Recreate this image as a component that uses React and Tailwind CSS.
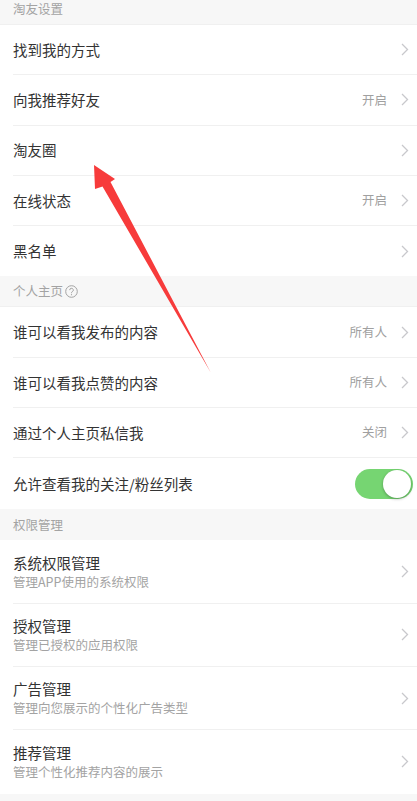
import { ChevronRight } from 'lucide-react'

const friendRows = [
  { title: '找到我的方式' },
  { title: '向我推荐好友', value: '开启' },
  { title: '淘友圈' },
  { title: '在线状态', value: '开启' },
  { title: '黑名单' },
]

const homeRows = [
  { title: '谁可以看我发布的内容', value: '所有人' },
  { title: '谁可以看我点赞的内容', value: '所有人' },
  { title: '通过个人主页私信我', value: '关闭' },
]

const permRows = [
  { title: '系统权限管理', desc: '管理APP使用的系统权限' },
  { title: '授权管理', desc: '管理已授权的应用权限' },
  { title: '广告管理', desc: '管理向您展示的个性化广告类型' },
  { title: '推荐管理', desc: '管理个性化推荐内容的展示' },
]

function Chevron() {
  return (
    <svg width="8" height="13" viewBox="0 0 8 13" className="ml-[14px] shrink-0">
      <path d="M1 1l5.5 5.5L1 12" fill="none" stroke="#c8c8cc" strokeWidth="1.3" />
    </svg>
  )
}

function Header({ children, className = '' }) {
  return (
    <div className={`h-[31px] bg-[#f7f7f7] flex items-center pl-[13px] text-[12.5px] text-[#a3a3a3] ${className}`}>
      {children}
    </div>
  )
}

function Row({ title, value, last }) {
  return (
    <div className="pl-[13px] bg-white">
      <div className={`h-[50.3px] flex items-center pr-[8px] ${last ? '' : 'border-b border-[#f0f0f0]'}`}>
        <span className="flex-1 text-[14.5px] text-[#333]">{title}</span>
        {value && <span className="text-[12.5px] text-[#a0a0a0]">{value}</span>}
        <Chevron />
      </div>
    </div>
  )
}

function PermRow({ title, desc, last }) {
  return (
    <div className="pl-[13px] bg-white">
      <div className={`h-[63.3px] flex items-center pr-[8px] ${last ? '' : 'border-b border-[#f0f0f0]'}`}>
        <div className="flex-1 flex flex-col">
          <span className="text-[14.5px] leading-[20px] text-[#333]">{title}</span>
          <span className="text-[12.5px] leading-[18px] text-[#a3a3a3]">{desc}</span>
        </div>
        <Chevron />
      </div>
    </div>
  )
}

export default function App() {
  return (
    <div
      className="relative w-[417px] h-[801px] overflow-hidden bg-[#f7f7f7]"
      style={{ fontFamily: '"Noto Sans CJK SC", "Noto Sans", sans-serif' }}
    >
      <Header className="mt-[-6px] border-b border-[#f0f0f0]">淘友设置</Header>
      {friendRows.map((r, i) => (
        <Row key={r.title} {...r} last={i === friendRows.length - 1} />
      ))}

      <Header className="border-b border-[#f0f0f0]">
        个人主页
        <svg width="13" height="13" viewBox="0 0 13 13" className="ml-[2px]">
          <circle cx="6.5" cy="6.5" r="5.8" fill="none" stroke="#a3a3a3" strokeWidth="1" />
          <path d="M4.7 5.1a1.8 1.8 0 1 1 2.6 1.6c-.6.3-.8.6-.8 1.2v.3" fill="none" stroke="#a3a3a3" strokeWidth="1" />
          <circle cx="6.5" cy="9.7" r="0.6" fill="#a3a3a3" />
        </svg>
      </Header>
      {homeRows.map((r) => (
        <Row key={r.title} {...r} />
      ))}
      <div className="pl-[13px] bg-white">
        <div className="h-[51px] flex items-center pr-[4px]">
          <span className="flex-1 text-[14.5px] text-[#333]">允许查看我的关注/粉丝列表</span>
          <div className="w-[58px] h-[30px] rounded-full bg-[#76d572] flex items-center justify-end pr-[2px]">
            <div className="w-[28px] h-[28px] rounded-full bg-white shadow-[0_1px_3px_rgba(0,0,0,0.3)]" />
          </div>
        </div>
      </div>

      <Header>权限管理</Header>
      {permRows.map((r, i) => (
        <PermRow key={r.title} {...r} last={i === permRows.length - 1} />
      ))}

      <svg
        className="absolute left-0 top-0 pointer-events-none"
        width="417"
        height="801"
        viewBox="0 0 417 801"
      >
        <polygon
          points="94,165 115,179 110.5,182 211,373 102.5,186.5 95,189"
          fill="#f73b3b"
        />
      </svg>
    </div>
  )
}
